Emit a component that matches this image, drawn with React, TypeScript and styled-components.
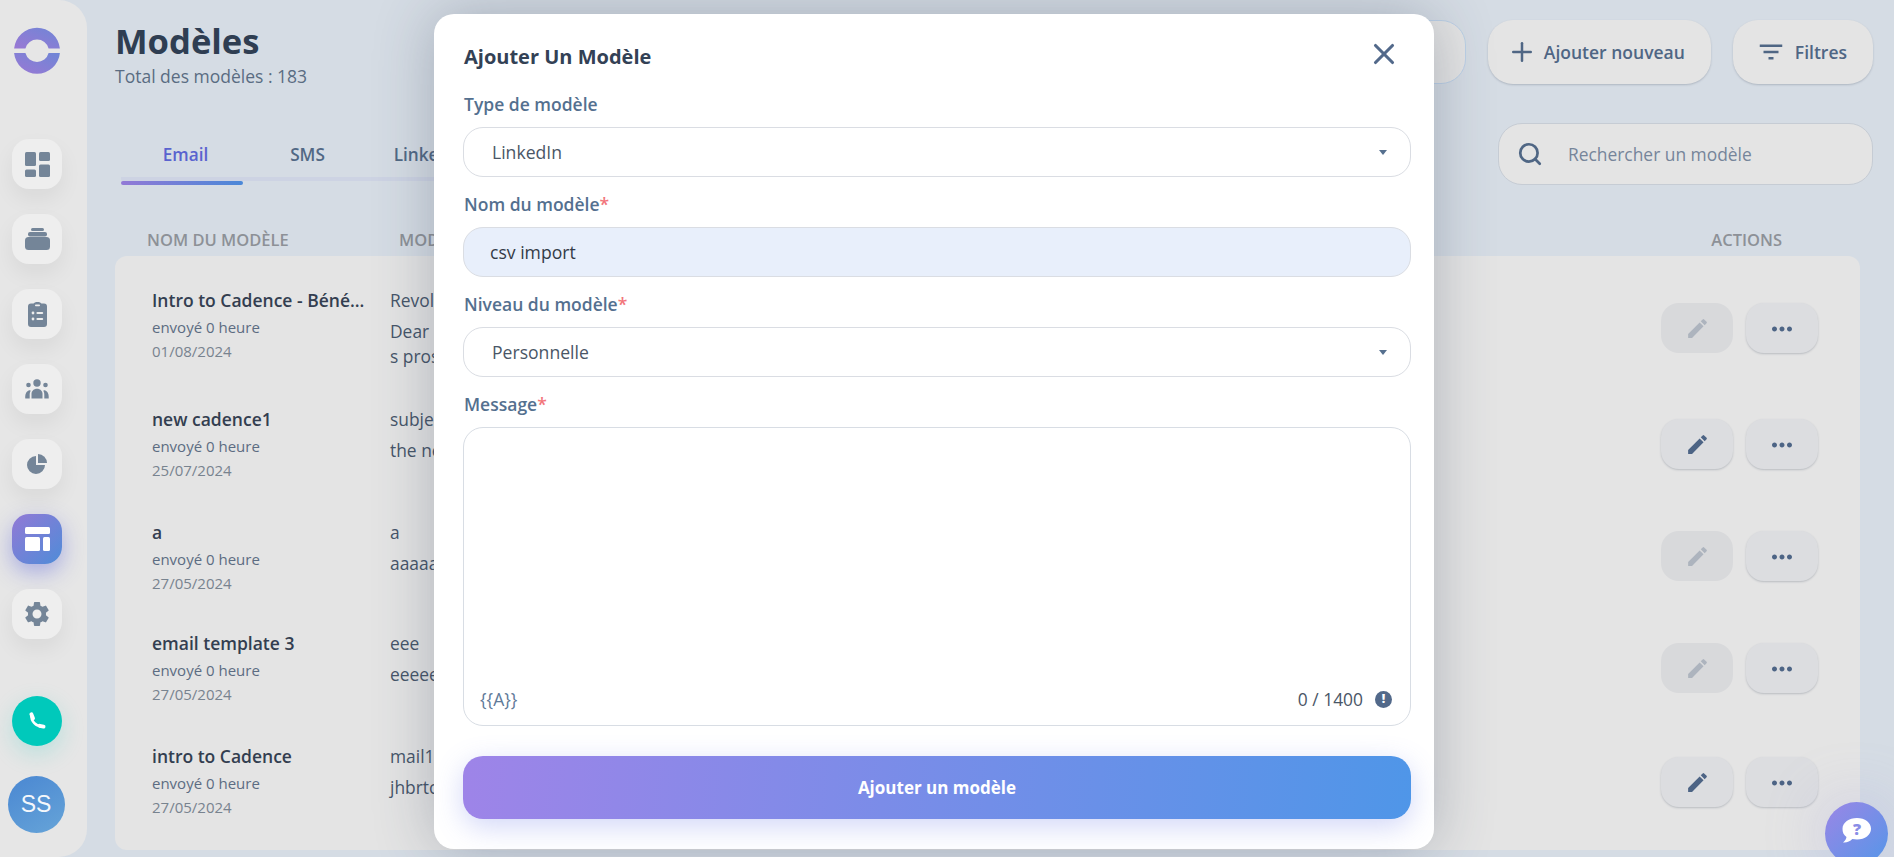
import React from 'react';
import styled, { createGlobalStyle } from 'styled-components';
import { MdEdit, MdFilterList, MdMoreHoriz, MdSettings } from 'react-icons/md';
import { Plus, Search, X } from 'lucide-react';

const Global = createGlobalStyle`
  html, body { margin: 0; padding: 0; height: 100%; overflow: hidden; }
  body { font-family: "Open Sans", "Noto Sans", sans-serif; background: #d5dce4; }
  * { box-sizing: border-box; }
`;

const Page = styled.div`
  position: relative;
  display: flex;
  width: 1894px;
  height: 857px;
  overflow: hidden;
  background: #d5dce4;
`;

const Sidebar = styled.aside`
  flex: 0 0 87px;
  height: 857px;
  display: flex;
  flex-direction: column;
  align-items: center;
  padding: 27px 13px 0 0;
  background: #e6e6e6;
  border-radius: 0 28px 28px 0;
`;

const Logo = styled.svg`
  width: 46px;
  height: 48px;
  margin-bottom: 64px;
`;

const NavList = styled.nav`
  display: flex;
  flex-direction: column;
  gap: 25px;
  margin-bottom: 57px;
`;

const NavButton = styled.div<{ $active?: boolean }>`
  width: 50px;
  height: 50px;
  border-radius: 17px;
  display: flex;
  align-items: center;
  justify-content: center;
  color: #748598;
  background: ${(p) => (p.$active ? 'linear-gradient(135deg, #9279d6, #4f8cd8)' : '#eeeeee')};
  box-shadow: ${(p) =>
    p.$active ? '0 8px 22px rgba(90, 100, 220, 0.45)' : '0 10px 22px rgba(0, 0, 0, 0.06)'};
`;

const PhoneButton = styled.div`
  width: 50px;
  height: 50px;
  border-radius: 50%;
  display: flex;
  align-items: center;
  justify-content: center;
  background: #00c9bb;
  box-shadow: 0 8px 24px rgba(0, 201, 187, 0.2);
  margin-bottom: 30px;
`;

const Avatar = styled.div`
  width: 57px;
  height: 57px;
  margin-left: -2px;
  border-radius: 50%;
  display: flex;
  align-items: center;
  justify-content: center;
  color: #f4f7fb;
  font-family: "Liberation Sans", sans-serif;
  font-size: 23px;
  background: linear-gradient(150deg, #4a87d2, #66a4d8);
`;

const Main = styled.main`
  flex: 1;
  min-width: 0;
  display: flex;
  flex-direction: column;
  padding: 20px 21px 0 28px;
`;

const Header = styled.header`
  display: flex;
  justify-content: space-between;
  align-items: flex-start;
  height: 103px;
`;

const TitleBlock = styled.div`
  display: flex;
  flex-direction: column;
`;

const Title = styled.h1`
  margin: 0;
  font-size: 34.6px;
  line-height: 42px;
  font-weight: 700;
  color: #2f3e52;
`;

const Subtitle = styled.div`
  font-size: 17.5px;
  line-height: 24px;
  color: #5a6c82;
  margin-top: 2px;
`;

const HeaderActions = styled.div`
  display: flex;
  gap: 22px;
`;

const HeadButton = styled.div<{ $pl?: number; $gap?: number }>`
  height: 64px;
  padding: 0 26px 0 ${(p) => p.$pl ?? 19}px;
  display: flex;
  align-items: center;
  gap: ${(p) => p.$gap ?? 7}px;
  border-radius: 25px;
  font-size: 17.5px;
  font-weight: 600;
  color: #4f6684;
  background: #e4e4e4;
  box-shadow: 0 1px 2px rgba(60, 70, 90, 0.25);
`;

const HiddenButton = styled.div`
  width: 160px;
  height: 64px;
  border-radius: 25px;
  background: #e4e4e4;
  border: 1px solid #bcd0e6;
`;

const TabsRow = styled.div`
  display: flex;
  justify-content: space-between;
  align-items: flex-start;
  height: 110px;
`;

const Tabs = styled.div`
  display: flex;
  margin: 14px 0 0 6px;
  width: 1100px;
  height: 44px;
  border-bottom: 4px solid #cdd3e3;
  border-radius: 2px;
`;

const Tab = styled.div<{ $active?: boolean }>`
  position: relative;
  width: 122px;
  height: 44px;
  padding: 6px 0 0 7px;
  text-align: center;
  font-size: 17.2px;
  line-height: 24px;
  font-weight: 600;
  color: ${(p) => (p.$active ? '#5a63cf' : '#516884')};
  &::after {
    content: '';
    display: ${(p) => (p.$active ? 'block' : 'none')};
    position: absolute;
    left: 0;
    right: 0;
    bottom: -4px;
    height: 4px;
    border-radius: 2px;
    background: linear-gradient(90deg, #9279d6, #4a88d8);
  }
`;

const SearchBox = styled.div`
  width: 375px;
  height: 62px;
  padding-left: 18px;
  display: flex;
  align-items: center;
  gap: 25px;
  color: #4f6684;
  background: #e4e4e4;
  border: 1px solid #c6ccd4;
  border-radius: 24px;
`;

const Placeholder = styled.span`
  font-size: 17.4px;
  color: #76859a;
`;

const ColumnHeads = styled.div`
  display: flex;
  align-items: center;
  height: 33px;
  margin-top: -10px;
  padding-right: 91px;
  font-size: 16.5px;
  font-weight: 600;
  color: #8d9197;
`;

const NameHead = styled.div`
  width: 284px;
  padding-left: 32px;
`;

const MessageHead = styled.div`
  flex: 1;
`;

const Card = styled.section`
  width: 1745px;
  height: 594px;
  padding-top: 19px;
  background: #e4e4e4;
  border-radius: 12px;
`;

const Row = styled.div<{ $h: number; $top: number }>`
  display: flex;
  height: ${(p) => p.$h}px;
  padding: ${(p) => p.$top}px 0 0 37px;
`;

const NameCol = styled.div`
  width: 238px;
  flex: none;
`;

const RowName = styled.div`
  font-size: 17.5px;
  line-height: 22px;
  font-weight: 600;
  color: #333e50;
  white-space: nowrap;
`;

const RowMeta = styled.div`
  font-size: 15px;
  line-height: 24px;
  color: #5c6c82;
  margin-top: 4px;
`;

const RowDate = styled.div`
  font-size: 15px;
  line-height: 24px;
  color: #78838f;
`;

const MessageCol = styled.div`
  flex: 1;
  min-width: 0;
  font-size: 17.4px;
  color: #465569;
`;

const Subject = styled.div`
  line-height: 22px;
`;

const Body = styled.div`
  margin-top: 8px;
  line-height: 25px;
`;

const Actions = styled.div<{ $offset: number }>`
  display: flex;
  gap: 13px;
  margin: ${(p) => p.$offset}px 42px 0 0;
`;

const EditButton = styled.div<{ $disabled?: boolean }>`
  width: 72px;
  height: 50px;
  border-radius: 18px;
  display: flex;
  align-items: center;
  justify-content: center;
  color: ${(p) => (p.$disabled ? '#adb4be' : '#4d6485')};
  background: ${(p) => (p.$disabled ? '#d8d9db' : '#dcdde0')};
  box-shadow: ${(p) => (p.$disabled ? 'none' : '0 1px 2px rgba(60, 70, 90, 0.25)')};
`;

const MoreButton = styled.div`
  width: 72px;
  height: 50px;
  padding-top: 2px;
  border-radius: 18px;
  display: flex;
  align-items: center;
  justify-content: center;
  color: #4d6485;
  background: #dcdde0;
  box-shadow: 0 1px 2px rgba(60, 70, 90, 0.25);
`;

const Modal = styled.div`
  position: absolute;
  left: 434px;
  top: 14px;
  width: 1000px;
  height: 835px;
  padding: 29px 23px 0 30px;
  display: flex;
  flex-direction: column;
  background: #fff;
  border-radius: 20px;
  box-shadow: 0 0 60px rgba(50, 62, 85, 0.3);
`;

const ModalHead = styled.div`
  display: flex;
  justify-content: space-between;
  align-items: center;
  height: 28px;
  margin-bottom: 22px;
  padding-right: 10px;
`;

const ModalTitle = styled.h2`
  margin: 0;
  font-size: 20px;
  line-height: 28px;
  font-weight: 700;
  color: #334155;
`;

const CloseIcon = styled(X)`
  margin-top: -6px;
  color: #52698a;
`;

const Label = styled.div`
  height: 22px;
  margin-bottom: 12px;
  font-size: 17.5px;
  line-height: 22px;
  font-weight: 600;
  color: #54708f;
`;

const Star = styled.span`
  color: #f2757b;
`;

const Field = styled.div<{ $filled?: boolean }>`
  width: 948px;
  height: 50px;
  margin-left: -1px;
  margin-bottom: 16px;
  padding: 0 23px 0 ${(p) => (p.$filled ? '26px' : '28px')};
  display: flex;
  align-items: center;
  justify-content: space-between;
  font-size: 17.6px;
  color: ${(p) => (p.$filled ? '#333b47' : '#4a5666')};
  background: ${(p) => (p.$filled ? '#e8effb' : '#fff')};
  border: 1px solid #dadde3;
  border-radius: 20px;
`;

const Caret = styled.span`
  width: 0;
  height: 0;
  border-left: 4.5px solid transparent;
  border-right: 4.5px solid transparent;
  border-top: 5px solid #56708f;
`;

const TextArea = styled.div`
  width: 948px;
  height: 299px;
  margin-left: -1px;
  padding: 0 18px 14px 16px;
  display: flex;
  align-items: flex-end;
  justify-content: space-between;
  background: #fff;
  border: 1px solid #d8dde4;
  border-radius: 20px;
`;

const Token = styled.span`
  font-size: 17.5px;
  line-height: 24px;
  color: #5f7a99;
`;

const Counter = styled.div`
  display: flex;
  align-items: center;
  gap: 12px;
  font-size: 17.4px;
  line-height: 24px;
  color: #4a5666;
`;

const InfoIcon = styled.span`
  width: 17px;
  height: 17px;
  border-radius: 50%;
  display: flex;
  align-items: center;
  justify-content: center;
  color: #fff;
  font-size: 12px;
  font-weight: 800;
  background: #52698a;
`;

const Submit = styled.div`
  width: 948px;
  height: 63px;
  margin: 30px 0 0 -1px;
  display: flex;
  align-items: center;
  justify-content: center;
  color: #fff;
  font-size: 17px;
  font-weight: 700;
  border-radius: 20px;
  background: linear-gradient(95deg, #9e84e8, #4f96e8);
  box-shadow: 0 8px 28px rgba(95, 110, 230, 0.28);
`;

const ChatBubble = styled.div`
  position: absolute;
  left: 1825px;
  top: 802px;
  width: 63px;
  height: 63px;
  border-radius: 50%;
  display: flex;
  align-items: flex-start;
  justify-content: center;
  padding-top: 16px;
  background: linear-gradient(135deg, #9b86e6, #5596e8);
  box-shadow: 0 0 60px rgba(150, 150, 220, 0.35);
`;

const rows = [
  { name: 'Intro to Cadence - Béné...', date: '01/08/2024', subject: 'Revolutionize', body: ['Dear', 's prospects'], h: 116, top: 14, active: false, offset: 14 },
  { name: 'new cadence1', date: '25/07/2024', subject: 'subject', body: ['the new'], h: 113, top: 17, active: true, offset: 11 },
  { name: 'a', date: '27/05/2024', subject: 'a', body: ['aaaaaa'], h: 112, top: 17, active: false, offset: 10 },
  { name: 'email template 3', date: '27/05/2024', subject: 'eee', body: ['eeeeee'], h: 113, top: 16, active: false, offset: 11 },
  { name: 'intro to Cadence', date: '27/05/2024', subject: 'mail1', body: ['jhbrtc'], h: 113, top: 16, active: true, offset: 12 },
];

export default function App() {
  return (
    <Page>
      <Global />
      <Sidebar>
        <Logo viewBox="0 0 46 48">
          <defs>
            <linearGradient id="lg" x1="0" y1="1" x2="1" y2="0">
              <stop offset="0" stopColor="#9a78d4" />
              <stop offset="1" stopColor="#6f86d6" />
            </linearGradient>
          </defs>
          <path fill="url(#lg)" d="M0.100 21.500A23 23 0 0 1 45.900 21.500H34.600A12 12 0 0 0 11.400 21.500Z" />
          <path fill="url(#lg)" d="M0.100 26A23 23 0 0 0 45.900 26H34.600A12 12 0 0 1 11.400 26Z" />
        </Logo>
        <NavList>
          <NavButton>
            <svg width="25" height="25" viewBox="0 0 25 25" fill="currentColor">
              <rect width="11" height="14" rx="1.500" />
              <rect y="17.500" width="11" height="7.500" rx="1.500" />
              <rect x="14" width="11" height="9" rx="1.500" />
              <rect x="14" y="12.500" width="11" height="12.500" rx="1.500" />
            </svg>
          </NavButton>
          <NavButton>
            <svg width="25" height="22" viewBox="0 0 25 22" fill="currentColor">
              <rect x="6" width="13" height="3" rx="1.500" />
              <rect x="3" y="4" width="19" height="4.500" rx="2" />
              <rect y="9" width="25" height="13" rx="3.500" />
            </svg>
          </NavButton>
          <NavButton>
            <svg width="19" height="25" viewBox="0 0 19 25" fill="currentColor">
              <path d="M3 1.500h2.600C6 .6 7.500 0 9.500 0s3.500.6 3.900 1.500H16a3 3 0 0 1 3 3V22a3 3 0 0 1-3 3H3a3 3 0 0 1-3-3V4.500a3 3 0 0 1 3-3Z" />
              <rect x="7" y="2.600" width="5" height="1.600" rx=".8" fill="#eeeeee" />
              <circle cx="5" cy="11" r="1.400" fill="#eeeeee" />
              <rect x="8.400" y="10" width="6.800" height="2" rx="1" fill="#eeeeee" />
              <circle cx="5" cy="17" r="1.400" fill="#eeeeee" />
              <rect x="8.400" y="16" width="6.800" height="2" rx="1" fill="#eeeeee" />
            </svg>
          </NavButton>
          <NavButton>
            <svg width="24" height="20" viewBox="0 0 24 20" fill="currentColor">
              <circle cx="12" cy="4" r="3.700" />
              <circle cx="3.500" cy="6" r="2.300" />
              <circle cx="20.500" cy="6" r="2.300" />
              <path d="M6.500 19.500v-4.500c0-3 2.400-5.200 5.500-5.200s5.500 2.200 5.500 5.200v4.500Z" />
              <path d="M4.700 19.500H.3c-.3-3.500.6-7.500 4-8.300 1 0 1.300.3 1.500.6-1 1.300-1.100 2.800-1.100 4.200Z" />
              <path d="M19.300 19.500h4.400c.3-3.500-.6-7.500-4-8.300-1 0-1.300.3-1.500.6 1 1.300 1.100 2.800 1.100 4.200Z" />
            </svg>
          </NavButton>
          <NavButton>
            <svg width="20" height="20" viewBox="0 0 20 20" fill="currentColor">
              <path d="M9 2A9 9 0 1 0 18 11H9Z" />
              <path d="M11 0A9 9 0 0 1 20 9H11Z" />
            </svg>
          </NavButton>
          <NavButton $active>
            <svg width="25" height="24" viewBox="0 0 25 24" fill="#fff">
              <rect width="25" height="7" rx="1.500" />
              <rect y="10" width="15" height="14" rx="1.500" />
              <rect x="18" y="10" width="7" height="14" rx="1.500" />
            </svg>
          </NavButton>
          <NavButton>
            <MdSettings size={30} />
          </NavButton>
        </NavList>
        <PhoneButton>
          <svg width="18" height="18" viewBox="0 0 18 18" fill="none" stroke="#fff" strokeLinecap="round">
            <path d="M3.500 3C2.800 9 8 15 15 14.500" strokeWidth="2.600" />
            <path d="M3.400 2.200 5 6.200" strokeWidth="3.800" />
            <path d="M11.700 13.800 15.600 14.600" strokeWidth="3.800" />
          </svg>
        </PhoneButton>
        <Avatar>SS</Avatar>
      </Sidebar>

      <Main>
        <Header>
          <TitleBlock>
            <Title>Modèles</Title>
            <Subtitle>Total des modèles : 183</Subtitle>
          </TitleBlock>
          <HeaderActions>
            <HiddenButton />
            <HeadButton>
              <Plus size={30} />
              Ajouter nouveau
            </HeadButton>
            <HeadButton $pl={23} $gap={9}>
              <MdFilterList size={30} />
              Filtres
            </HeadButton>
          </HeaderActions>
        </Header>

        <TabsRow>
          <Tabs>
            <Tab $active>Email</Tab>
            <Tab>SMS</Tab>
            <Tab>LinkedIn</Tab>
          </Tabs>
          <SearchBox>
            <Search size={26} strokeWidth={2.5} />
            <Placeholder>Rechercher un modèle</Placeholder>
          </SearchBox>
        </TabsRow>

        <ColumnHeads>
          <NameHead>NOM DU MODÈLE</NameHead>
          <MessageHead>MODÈLE</MessageHead>
          <div>ACTIONS</div>
        </ColumnHeads>

        <Card>
          {rows.map((r) => (
            <Row key={r.name} $h={r.h} $top={r.top}>
              <NameCol>
                <RowName>{r.name}</RowName>
                <RowMeta>envoyé 0 heure</RowMeta>
                <RowDate>{r.date}</RowDate>
              </NameCol>
              <MessageCol>
                <Subject>{r.subject}</Subject>
                <Body>
                  {r.body.map((b) => (
                    <div key={b}>{b}</div>
                  ))}
                </Body>
              </MessageCol>
              <Actions $offset={r.offset}>
                <EditButton $disabled={!r.active}>
                  <MdEdit size={25} />
                </EditButton>
                <MoreButton>
                  <MdMoreHoriz size={30} />
                </MoreButton>
              </Actions>
            </Row>
          ))}
        </Card>
      </Main>

      <Modal>
        <ModalHead>
          <ModalTitle>Ajouter Un Modèle</ModalTitle>
          <CloseIcon size={34} strokeWidth={2.2} />
        </ModalHead>
        <Label>Type de modèle</Label>
        <Field>
          LinkedIn
          <Caret />
        </Field>
        <Label>
          Nom du modèle<Star>*</Star>
        </Label>
        <Field $filled>csv import</Field>
        <Label>
          Niveau du modèle<Star>*</Star>
        </Label>
        <Field>
          Personnelle
          <Caret />
        </Field>
        <Label>
          Message<Star>*</Star>
        </Label>
        <TextArea>
          <Token>{'{{A}}'}</Token>
          <Counter>
            0 / 1400
            <InfoIcon>!</InfoIcon>
          </Counter>
        </TextArea>
        <Submit>Ajouter un modèle</Submit>
      </Modal>

      <ChatBubble>
        <svg width="30" height="26" viewBox="0 0 30 26">
          <path fill="#fff" d="M15 0c8 0 14 4.600 14 10.700S23 21.500 15 21.500c-1.600 0-3.200-.2-4.700-.5C8 23.500 4.500 25 1 24.500c2-1.600 3.200-3.400 3.500-5.500C1.500 17 .5 14 .5 10.700.5 4.600 7 0 15 0Z" />
          <text x="15" y="17" textAnchor="middle" fontFamily="Open Sans" fontWeight="800" fontSize="16" fill="#8a8de6">?</text>
        </svg>
      </ChatBubble>
    </Page>
  );
}
